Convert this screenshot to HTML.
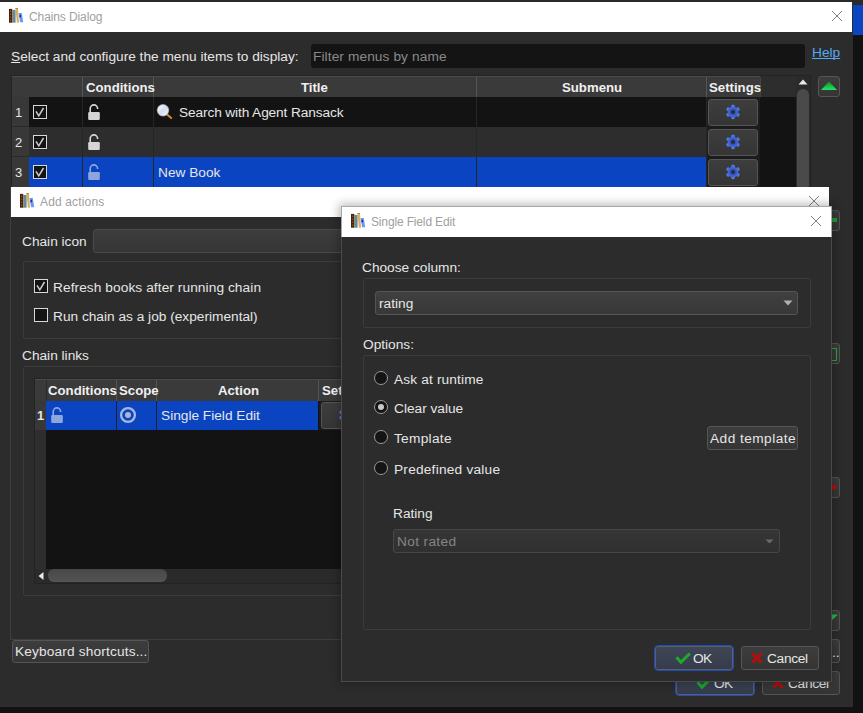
<!DOCTYPE html>
<html><head><meta charset="utf-8">
<style>
*{box-sizing:border-box;margin:0;padding:0}
html,body{width:863px;height:713px;overflow:hidden;background:#121212;font-family:"Liberation Sans",sans-serif;font-size:13.7px;color:#e6e6e6}
.a{position:absolute}
.t{position:absolute;white-space:pre;line-height:1}
.win{position:absolute;background:#2c2c2c}
.tb{position:absolute;background:#fff}
.ttl{position:absolute;white-space:pre;font-size:12px;color:#a0a0a0;line-height:1;letter-spacing:-0.15px}
.btn{position:absolute;border:1px solid #555;border-radius:3px;background:linear-gradient(#3d3d3d,#353535)}
.grp{position:absolute;border:1px solid #3b3b3b;border-radius:2px}
.hdr{position:absolute;background:#3a3a3a;border-top:1px solid #4b4b4b}
.hd{position:absolute;font-weight:bold;font-size:13.2px;color:#f0f0f0;white-space:pre;line-height:1}
.vl{position:absolute;width:1px}
.cb{position:absolute;width:14px;height:14px;border:1px solid #d8d8d8;background:#141414}
.rd{position:absolute;width:14px;height:14px;border:1px solid #9a9a9a;border-radius:50%;background:#141414}
</style></head><body>

<!-- background app strips -->
<div class="a" style="left:0;top:0;width:863px;height:2px;background:#2a2a2a"></div>
<div class="a" style="left:853px;top:0;width:10px;height:5px;background:#2a2a2a"></div>
<div class="a" style="left:853px;top:5px;width:10px;height:30px;background:#0b44c1"></div>

<!-- ================= CHAINS DIALOG ================= -->
<div class="win" style="left:0;top:2px;width:853px;height:705px"></div>
<div class="tb" style="left:0;top:2px;width:852px;height:30px"></div>
<svg class="a" style="left:9px;top:8px" width="15" height="15" viewBox="0 0 15 15">
 <rect x="0" y="0.9" width="3.2" height="13.8" fill="#4a220a"/>
 <rect x="1.2" y="2.5" width="1" height="1.5" fill="#9a6018"/><rect x="1.2" y="5.5" width="1" height="1.5" fill="#9a6018"/><rect x="1.2" y="8.5" width="1" height="1.5" fill="#9a6018"/><rect x="1.2" y="11.5" width="1" height="1.5" fill="#9a6018"/>
 <rect x="3.2" y="1.9" width="3.4" height="12.8" fill="#6a8890"/>
 <path d="M6.4 0.2L9 0.2L10 14.8L7.9 14.8Z" fill="#d8b060"/>
 <path d="M6.4 0.2L9 0.2L9.05 0.9L6.45 0.9Z" fill="#b06060"/>
 <path d="M9.5 5.1L12.8 5.1L14.2 14.3L11.1 14.3Z" fill="#6a9af6"/>
 <ellipse cx="11.3" cy="8" rx="0.9" ry="1.6" fill="#1a30c0"/>
</svg>
<div class="ttl" style="left:29px;top:11px;letter-spacing:-0.1px">Chains Dialog</div>
<svg class="a" style="left:831px;top:10px" width="12" height="12" viewBox="0 0 12 12"><path d="M1 1L11 11M11 1L1 11" stroke="#808080" stroke-width="1"/></svg>

<div class="t" style="left:11px;top:50px"><u style="text-decoration-thickness:1px;text-underline-offset:1px">S</u>elect and configure the menu items to display:</div>
<div class="a" style="left:311px;top:44px;width:494px;height:24px;background:#141414;border-radius:3px"></div>
<div class="t" style="left:313px;top:50px;color:#8a8a8a;letter-spacing:0.1px">Filter menus by name</div>
<div class="t" style="left:812px;top:46px;color:#56a8f0;text-decoration:underline;text-underline-offset:1px;text-decoration-skip-ink:none">Help</div>

<!-- chains table -->
<div class="a" style="left:11px;top:75px;width:800px;height:112px;background:#2d2d2d;border:1px solid #232323;border-bottom:none"></div>
<div class="hdr" style="left:12px;top:76px;width:748px;height:21px"></div>
<div class="a" style="left:29px;top:97px;width:767px;height:30px;background:#131313"></div>
<div class="a" style="left:29px;top:127px;width:767px;height:30px;background:#2d2d2d"></div>
<div class="a" style="left:29px;top:157px;width:731px;height:30px;background:#0b44c1"></div>
<div class="a" style="left:760px;top:97px;width:36px;height:90px;background:#131313"></div>
<div class="a" style="left:706px;top:97px;width:54px;height:90px;background:#1c1c1c"></div>
<!-- row headers -->
<div class="a" style="left:12px;top:97px;width:17px;height:90px;background:#383838"></div>
<div class="a" style="left:12px;top:126px;width:17px;height:1px;background:#2a2a2a"></div>
<div class="a" style="left:12px;top:156px;width:17px;height:1px;background:#2a2a2a"></div>
<div class="t" style="left:15px;top:106px;font-size:13px">1</div>
<div class="t" style="left:15px;top:136px;font-size:13px">2</div>
<div class="t" style="left:15px;top:166px;font-size:13px">3</div>
<!-- header col lines -->
<div class="vl" style="left:82px;top:77px;height:20px;background:#555"></div>
<div class="vl" style="left:153px;top:77px;height:20px;background:#555"></div>
<div class="vl" style="left:476px;top:77px;height:20px;background:#555"></div>
<div class="vl" style="left:706px;top:77px;height:20px;background:#555"></div>
<div class="vl" style="left:760px;top:77px;height:20px;background:#444"></div>
<!-- body col lines -->
<div class="vl" style="left:82px;top:97px;height:90px;background:#262626"></div>
<div class="vl" style="left:153px;top:97px;height:90px;background:#262626"></div>
<div class="vl" style="left:476px;top:97px;height:90px;background:#262626"></div>
<div class="vl" style="left:706px;top:97px;height:90px;background:#262626"></div>
<div class="hd" style="left:86px;top:81px">Conditions</div>
<div class="hd" style="left:301px;top:81px">Title</div>
<div class="hd" style="left:562px;top:81px">Submenu</div>
<div class="hd" style="left:709px;top:81px">Settings</div>

<!-- checkboxes -->
<div class="cb" style="left:33px;top:105px"></div>
<div class="cb" style="left:33px;top:135px"></div>
<div class="cb" style="left:33px;top:165px"></div>
<svg class="a" style="left:33px;top:105px" width="14" height="75"><g fill="none" stroke="#c8c8c8" stroke-width="1.6"><path d="M3 6.3L5.8 10.8L10.5 3"/><path d="M3 36.3L5.8 40.8L10.5 33"/><path d="M3 66.3L5.8 70.8L10.5 63"/></g></svg>
<!-- locks -->
<svg class="a" style="left:88px;top:104px" width="13" height="17" viewBox="0 0 13 17"><path d="M2.2 8.5V4.6A3.7 3.7 0 0 1 9.6 4.6V4.9" fill="none" stroke="#d6d6d6" stroke-width="1.6"/><rect x="0.2" y="8.1" width="11.6" height="7.8" rx="1.2" fill="#d6d6d6"/></svg>
<svg class="a" style="left:88px;top:134px" width="13" height="17" viewBox="0 0 13 17"><path d="M2.2 8.5V4.6A3.7 3.7 0 0 1 9.6 4.6V4.9" fill="none" stroke="#d6d6d6" stroke-width="1.6"/><rect x="0.2" y="8.1" width="11.6" height="7.8" rx="1.2" fill="#d6d6d6"/></svg>
<svg class="a" style="left:88px;top:164px" width="13" height="17" viewBox="0 0 13 17"><path d="M2.2 8.5V4.6A3.7 3.7 0 0 1 9.6 4.6V4.9" fill="none" stroke="#8fa6dc" stroke-width="1.6"/><rect x="0.2" y="8.1" width="11.6" height="7.8" rx="1.2" fill="#8fa6dc"/></svg>
<!-- search icon -->
<svg class="a" style="left:156px;top:103px" width="18" height="18" viewBox="0 0 18 18"><defs><linearGradient id="mg" x1="0" y1="0" x2="1" y2="1"><stop offset="0" stop-color="#ffffff"/><stop offset="0.5" stop-color="#d6dcf0"/><stop offset="1" stop-color="#f4f6ff"/></linearGradient></defs><line x1="10.5" y1="11" x2="15.8" y2="15.5" stroke="#d8901a" stroke-width="1.9"/><circle cx="7" cy="7.3" r="5.8" fill="url(#mg)" stroke="#a8acb8" stroke-width="0.7"/></svg>
<div class="t" style="left:179px;top:106px;letter-spacing:-0.12px">Search with Agent Ransack</div>
<div class="t" style="left:158px;top:166px">New Book</div>
<!-- settings buttons -->
<div class="btn" style="left:708px;top:99px;width:50px;height:27px"></div>
<div class="btn" style="left:708px;top:129px;width:50px;height:27px"></div>
<div class="btn" style="left:708px;top:159px;width:50px;height:27px"></div>
<svg class="a" style="left:725px;top:104px" width="16" height="76" viewBox="0 0 16 76">
 <defs><radialGradient id="gg" gradientUnits="userSpaceOnUse" cx="8" cy="8" r="7.5"><stop offset="0.3" stop-color="#2f4fc0"/><stop offset="1" stop-color="#5a86f0"/></radialGradient><g id="gear"><g fill="url(#gg)"><circle cx="8" cy="8" r="5.2"/><rect x="6.2" y="0.8" width="3.6" height="14.4" rx="1.4"/><rect x="6.2" y="0.8" width="3.6" height="14.4" rx="1.4" transform="rotate(60 8 8)"/><rect x="6.2" y="0.8" width="3.6" height="14.4" rx="1.4" transform="rotate(-60 8 8)"/></g><circle cx="8" cy="8" r="2.1" fill="#2e2e2e"/></g></defs>
 <use href="#gear" y="0"/><use href="#gear" y="30"/><use href="#gear" y="60"/>
</svg>
<!-- scrollbar -->
<div class="a" style="left:796px;top:76px;width:14px;height:111px;background:#2a2a2a"></div>
<svg class="a" style="left:798px;top:79px" width="10" height="6"><path d="M0.5 5.5L5 0.5L9.5 5.5Z" fill="#e8e8e8"/></svg>
<div class="a" style="left:797px;top:89px;width:12px;height:98px;background:#4a4a4a;border-radius:6px 6px 0 0"></div>
<!-- green up btn -->
<div class="btn" style="left:818px;top:76px;width:22px;height:21px"></div>
<svg class="a" style="left:820px;top:80px" width="18" height="12"><defs><linearGradient id="grn" x1="0" y1="0" x2="0" y2="1"><stop offset="0" stop-color="#0c8a2c"/><stop offset="1" stop-color="#22e862"/></linearGradient></defs><path d="M1 10L9 1.5L17 10Z" fill="url(#grn)"/></svg>

<!-- right column buttons (partially hidden) -->
<div class="btn" style="left:818px;top:210px;width:22px;height:21px"></div>
<div class="a" style="left:831px;top:218px;width:6px;height:4px;background:#1e9a38"></div>
<div class="btn" style="left:818px;top:343px;width:22px;height:21px"></div>
<div class="a" style="left:830px;top:348px;width:7px;height:13px;border:1.5px solid #2aa83a;border-left:none;border-radius:0 1px 1px 0"></div>
<div class="btn" style="left:818px;top:477px;width:22px;height:21px"></div>
<div class="a" style="left:831px;top:485px;width:5px;height:4px;background:#c80606"></div>
<div class="btn" style="left:818px;top:610px;width:22px;height:21px"></div>
<svg class="a" style="left:831px;top:614px" width="8" height="8"><path d="M0 0.5L7 0.5L0 7Z" fill="#1fc050"/></svg>
<div class="btn" style="left:818px;top:639px;width:22px;height:24px"></div>
<div class="t" style="left:832px;top:646px">..</div>

<!-- keyboard shortcuts -->
<div class="btn" style="left:12px;top:640px;width:137px;height:23px"></div>
<div class="t" style="left:15px;top:645px;letter-spacing:0.15px">Keyboard shortcuts...</div>
<!-- chains ok/cancel -->
<div class="a" style="left:675px;top:670px;width:80px;height:26px;border:1px solid #1f4cc0;border-radius:4px"></div><div class="btn" style="left:676px;top:671px;width:78px;height:24px;border-color:#5a5f6a;background:linear-gradient(#3e4555,#363c4c)"></div>
<svg class="a" style="left:696px;top:677px" width="16" height="12"><path d="M1.5 5.3L6 10.2L14.8 1.5" fill="none" stroke="#1ea82e" stroke-width="3.1"/></svg>
<div class="t" style="left:714px;top:677px;letter-spacing:-0.6px">OK</div>
<div class="btn" style="left:762px;top:671px;width:78px;height:24px"></div>
<svg class="a" style="left:772px;top:677px" width="12" height="12"><path d="M1.5 1.5L10.5 10.5M10.5 1.5L1.5 10.5" stroke="#b80c0c" stroke-width="3"/></svg>
<div class="t" style="left:788px;top:677px;letter-spacing:-0.3px">Cancel</div>

<!-- ================= ADD ACTIONS ================= -->
<div class="win" style="left:10px;top:187px;width:820px;height:453px;border-left:1px solid #3e3e3e;border-bottom:1px solid #3e3e3e"></div>
<div class="tb" style="left:11px;top:187px;width:818px;height:30px"></div>
<svg class="a" style="left:20px;top:193px" width="15" height="15" viewBox="0 0 15 15">
 <rect x="0" y="0.9" width="3.2" height="13.8" fill="#4a220a"/>
 <rect x="1.2" y="2.5" width="1" height="1.5" fill="#9a6018"/><rect x="1.2" y="5.5" width="1" height="1.5" fill="#9a6018"/><rect x="1.2" y="8.5" width="1" height="1.5" fill="#9a6018"/><rect x="1.2" y="11.5" width="1" height="1.5" fill="#9a6018"/>
 <rect x="3.2" y="1.9" width="3.4" height="12.8" fill="#6a8890"/>
 <path d="M6.4 0.2L9 0.2L10 14.8L7.9 14.8Z" fill="#d8b060"/>
 <path d="M6.4 0.2L9 0.2L9.05 0.9L6.45 0.9Z" fill="#b06060"/>
 <path d="M9.5 5.1L12.8 5.1L14.2 14.3L11.1 14.3Z" fill="#6a9af6"/>
 <ellipse cx="11.3" cy="8" rx="0.9" ry="1.6" fill="#1a30c0"/>
</svg>
<div class="ttl" style="left:40px;top:196px;letter-spacing:0.15px">Add actions</div>
<svg class="a" style="left:808px;top:195px" width="12" height="12" viewBox="0 0 12 12"><path d="M1 1L11 11M11 1L1 11" stroke="#808080" stroke-width="1"/></svg>

<div class="t" style="left:22px;top:235px">Chain icon</div>
<div class="btn" style="left:93px;top:229px;width:260px;height:24px;border-color:#4a4a4a"></div>
<div class="grp" style="left:23px;top:261px;width:330px;height:78px"></div>
<div class="cb" style="left:34px;top:279px"></div>
<svg class="a" style="left:34px;top:279px" width="14" height="14"><path d="M3 6.3L5.8 10.8L10.5 3" fill="none" stroke="#c8c8c8" stroke-width="1.6"/></svg>
<div class="t" style="left:53px;top:281px;letter-spacing:0.08px">Refresh books after running chain</div>
<div class="cb" style="left:34px;top:308px"></div>
<div class="t" style="left:53px;top:310px">Run chain as a job (experimental)</div>
<div class="t" style="left:22px;top:349px">Chain links</div>
<div class="grp" style="left:23px;top:366px;width:330px;height:230px"></div>

<!-- chain links table -->
<div class="a" style="left:34px;top:378px;width:312px;height:206px;background:#131313;border:1px solid #232323"></div>
<div class="hdr" style="left:35px;top:379px;width:310px;height:22px"></div>
<div class="a" style="left:35px;top:401px;width:11px;height:168px;background:#2e2e2e"></div>
<div class="a" style="left:35px;top:401px;width:11px;height:29px;background:#383838"></div>
<div class="t" style="left:37px;top:409px;font-weight:bold;font-size:13px">1</div>
<div class="a" style="left:46px;top:401px;width:272px;height:29px;background:#0b44c1"></div>
<div class="a" style="left:319px;top:401px;width:30px;height:29px;background:#1c1c1c"></div>
<div class="vl" style="left:46px;top:380px;height:21px;background:#2a2a2a"></div>
<div class="vl" style="left:116px;top:380px;height:21px;background:#555"></div>
<div class="vl" style="left:156px;top:380px;height:21px;background:#555"></div>
<div class="vl" style="left:318px;top:380px;height:21px;background:#555"></div>
<div class="vl" style="left:116px;top:401px;height:29px;background:#1a2030"></div>
<div class="vl" style="left:156px;top:401px;height:29px;background:#1a2030"></div>
<div class="hd" style="left:48px;top:384px">Conditions</div>
<div class="hd" style="left:119px;top:384px">Scope</div>
<div class="hd" style="left:218px;top:384px">Action</div>
<div class="hd" style="left:322px;top:384px">Settings</div>
<svg class="a" style="left:51px;top:407px" width="13" height="17" viewBox="0 0 13 17"><path d="M2.2 8.5V4.6A3.7 3.7 0 0 1 9.6 4.6V4.9" fill="none" stroke="#8fa6dc" stroke-width="1.6"/><rect x="0.2" y="8.1" width="11.6" height="7.8" rx="1.2" fill="#8fa6dc"/></svg>
<svg class="a" style="left:119px;top:406px" width="18" height="18"><circle cx="9" cy="9" r="6.9" fill="none" stroke="#aab6d8" stroke-width="2.3"/><circle cx="9" cy="9" r="3" fill="#aab6d8"/></svg>
<div class="t" style="left:161px;top:409px">Single Field Edit</div>
<div class="btn" style="left:321px;top:402px;width:40px;height:27px"></div>
<svg class="a" style="left:338px;top:407px" width="16" height="16" viewBox="0 0 16 16"><use href="#gear"/></svg>
<!-- h scrollbar -->
<div class="a" style="left:35px;top:569px;width:310px;height:14px;background:#2a2a2a"></div>
<svg class="a" style="left:38px;top:571px" width="6" height="10"><path d="M5.5 1L0.5 5L5.5 9Z" fill="#e8e8e8"/></svg>
<div class="a" style="left:48px;top:569px;width:119px;height:13px;background:linear-gradient(#474747,#545454);border-radius:6px"></div>

<!-- ================= SINGLE FIELD EDIT ================= -->
<div class="win" style="left:341px;top:206px;width:491px;height:476px;border:1px solid #4a4a4a;box-shadow:0 0 9px 2px rgba(0,0,0,0.28)"></div>
<div class="tb" style="left:342px;top:207px;width:489px;height:30px"></div>
<div class="a" style="left:341px;top:206px;width:491px;height:31px;border:1px solid #a8a8a8;border-bottom:none"></div>
<svg class="a" style="left:351px;top:213px" width="15" height="15" viewBox="0 0 15 15">
 <rect x="0" y="0.9" width="3.2" height="13.8" fill="#4a220a"/>
 <rect x="1.2" y="2.5" width="1" height="1.5" fill="#9a6018"/><rect x="1.2" y="5.5" width="1" height="1.5" fill="#9a6018"/><rect x="1.2" y="8.5" width="1" height="1.5" fill="#9a6018"/><rect x="1.2" y="11.5" width="1" height="1.5" fill="#9a6018"/>
 <rect x="3.2" y="1.9" width="3.4" height="12.8" fill="#6a8890"/>
 <path d="M6.4 0.2L9 0.2L10 14.8L7.9 14.8Z" fill="#d8b060"/>
 <path d="M6.4 0.2L9 0.2L9.05 0.9L6.45 0.9Z" fill="#b06060"/>
 <path d="M9.5 5.1L12.8 5.1L14.2 14.3L11.1 14.3Z" fill="#6a9af6"/>
 <ellipse cx="11.3" cy="8" rx="0.9" ry="1.6" fill="#1a30c0"/>
</svg>
<div class="ttl" style="left:371px;top:216px">Single Field Edit</div>
<svg class="a" style="left:810px;top:215px" width="12" height="12" viewBox="0 0 12 12"><path d="M1 1L11 11M11 1L1 11" stroke="#808080" stroke-width="1"/></svg>

<div class="t" style="left:362px;top:261px">Choose column:</div>
<div class="grp" style="left:363px;top:278px;width:448px;height:50px"></div>
<div class="btn" style="left:375px;top:291px;width:423px;height:24px;border-color:#555;background:linear-gradient(#404040,#383838)"></div>
<div class="t" style="left:379px;top:297px">rating</div>
<svg class="a" style="left:783px;top:300px" width="10" height="6"><path d="M0.5 0.5L9.5 0.5L5 5.5Z" fill="#b0b0b0"/></svg>

<div class="t" style="left:363px;top:338px">Options:</div>
<div class="grp" style="left:363px;top:355px;width:448px;height:275px"></div>
<div class="rd" style="left:374px;top:371px"></div>
<div class="rd" style="left:374px;top:400px"></div>
<div class="a" style="left:378px;top:404px;width:6px;height:6px;border-radius:50%;background:#c8c8c8"></div>
<div class="rd" style="left:374px;top:430px"></div>
<div class="rd" style="left:374px;top:461px"></div>
<div class="t" style="left:394px;top:373px;letter-spacing:0.15px">Ask at runtime</div>
<div class="t" style="left:394px;top:402px">Clear value</div>
<div class="t" style="left:394px;top:432px;letter-spacing:0.28px">Template</div>
<div class="t" style="left:394px;top:463px;letter-spacing:0.22px">Predefined value</div>
<div class="btn" style="left:707px;top:426px;width:91px;height:24px"></div>
<div class="t" style="left:710px;top:432px;letter-spacing:0.45px">Add template</div>
<div class="t" style="left:393px;top:507px">Rating</div>
<div class="btn" style="left:393px;top:529px;width:387px;height:24px;border-color:#484848;background:linear-gradient(#363636,#303030)"></div>
<div class="t" style="left:397px;top:535px;color:#858585;letter-spacing:0.35px">Not rated</div>
<svg class="a" style="left:765px;top:539px" width="9" height="5"><path d="M0.5 0.5L8.5 0.5L4.5 4.5Z" fill="#6a6a6a"/></svg>

<div class="a" style="left:654px;top:645px;width:80px;height:26px;border:1px solid #1f4cc0;border-radius:4px"></div><div class="btn" style="left:655px;top:646px;width:78px;height:24px;border-color:#5a5f6a;background:linear-gradient(#3e4555,#363c4c)"></div>
<svg class="a" style="left:675px;top:652px" width="16" height="12"><path d="M1.5 5.3L6 10.2L14.8 1.5" fill="none" stroke="#1ea82e" stroke-width="3.1"/></svg>
<div class="t" style="left:693px;top:652px;letter-spacing:-0.6px">OK</div>
<div class="btn" style="left:741px;top:646px;width:78px;height:24px"></div>
<svg class="a" style="left:751px;top:652px" width="12" height="12"><path d="M1.5 1.5L10.5 10.5M10.5 1.5L1.5 10.5" stroke="#b80c0c" stroke-width="3"/></svg>
<div class="t" style="left:767px;top:652px;letter-spacing:-0.3px">Cancel</div>

</body></html>
